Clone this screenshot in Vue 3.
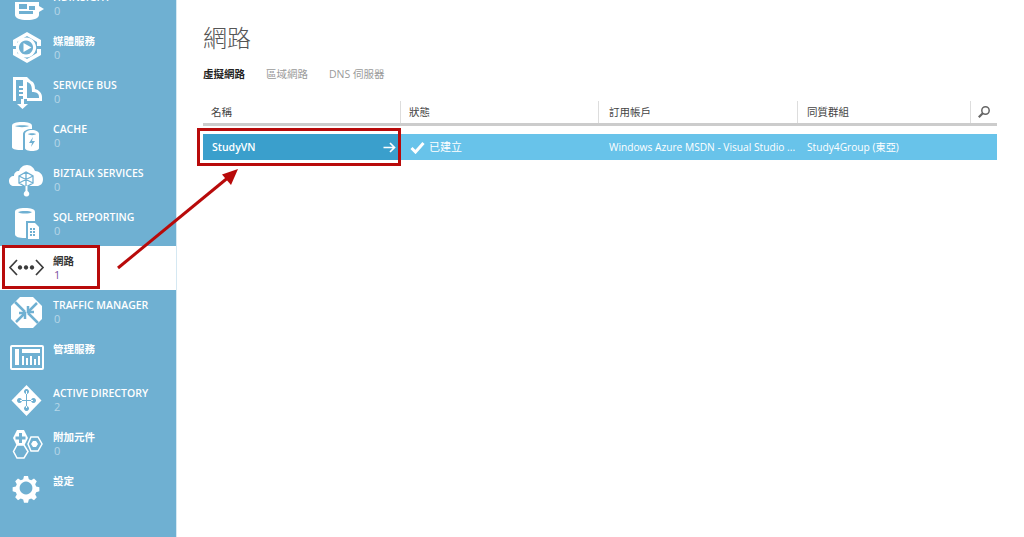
<script setup>
const F = 'f', B = 'b', T = 't'
const items = [
  { name: 'HDINSIGHT', count: '0', shapes: [
    [F, 'M15 20h24v13c0 3-5 5-12 5s-12-2-12-5z'], [B, 'M19 22h8v5h-8zM29 24h6v4h-6zM19 29h14v3h-14z'], [F, 'M39 24l5 3-5 3z'] ] },
  { name: '媒體服務', count: '0', shapes: [
    [F, 'M27 6l14 8v6h-4v-4l-10-6-10 6v4h-4v-6z'], [F, 'M13 23h4v4l10 6 10-6v-4h4v6l-14 8-14-8z'],
    [T, 'M26 13a8.500 8.500 0 1 0 .01 0z'], [F, 'M23.500 17l8 4.500-8 4.500z'] ] },
  { name: 'SERVICE BUS', count: '0', shapes: [
    [F, 'M13 7h14l4 4c3 1 4 4 4 8 4 1 7 4 7 8v4H27v-3h12v-1c0-4-3-5-7-5 0-6-1-9-5-10v17h-4V10h-7v21h-3z'],
    [F, 'M19 16h8v2h-8zM19 20h8v2h-8zM19 24h8v2h-8z'], [F, 'M21 29h3v5h4l-5.500 5-5.500-5h4z'] ] },
  { name: 'CACHE', count: '0', shapes: [
    [F, 'M12 12c0-3 4-4 10-4s10 1 10 4v3c-5 0-9 2-9 5v16h-3c-5 0-8-1-8-3z'], [B, 'M15 12c2 1.500 12 1.500 14 0-2-1-12-1-14 0z'],
    [F, 'M25 20c0-2 3-4 7-4s7 2 7 4v14c0 2-3 3-7 3s-7-1-7-3z'], [B, 'M28 20c1 1.500 7 1.500 8 0-1-1-7-1-8 0z'], [B, 'M33 23l-4 6h3l-1 4 4-6h-3z'] ] },
  { name: 'BIZTALK SERVICES', count: '0', shapes: [
    [F, 'M14 28c-3 0-5-2-5-5s2-5 5-5c0-3 2-5 5-5 1-3 4-6 8-6s7 3 8 6c4 0 8 3 8 8s-3 7-6 7z'],
    ['bl2', 'M19 18l7-4 7 4v7l-7 4-7-4zM26 14v15M19 18l14 7M33 18l-14 7'],
    [F, 'M25.500 28h2v6h-2z'], [F, 'M26.500 33a2.800 2.800 0 1 0 .01 0z'] ] },
  { name: 'SQL REPORTING', count: '0', shapes: [
    [F, 'M15 10c0-3 4-4 10-4s10 1 10 4v10h-8v16h-2c-6 0-10-1-10-4z'], [B, 'M18 10c2 2 12 2 14 0-2-1.500-12-1.500-14 0z'],
    [B, 'M26 19h10l5 5v14H26z'], [F, 'M28 21h7l4 4v12H28z'], [B, 'M30 26h2v2h-2zM33 26h2v2h-2zM30 29h2v2h-2zM33 29h2v2h-2zM30 32h2v2h-2zM33 32h2v2h-2z'] ] },
  { name: '網路', count: '1', active: true, shapes: [
    ['d', 'M17 14l-7 7.500 7 7.500M36 14l7 7.500-7 7.500'], ['k', 'M20 19.300a2.200 2.200 0 1 0 .01 0zM26 19.300a2.200 2.200 0 1 0 .01 0zM32 19.300a2.200 2.200 0 1 0 .01 0z'] ] },
  { name: 'TRAFFIC MANAGER', count: '0', shapes: [
    [F, 'M20 7h13l9 9v13l-9 9H20l-9-9V16z'],
    ['bl', 'M15 12l10 10M38 33L28 23M37 13L28 22M16 32l9-9'],
    ['bl', 'M28 16v6h6M25 29v-6h-6'] ] },
  { name: '管理服務', count: '', shapes: [
    ['o', 'M12 12h30a1 1 0 0 1 1 1v21a1 1 0 0 1-1 1H12a1 1 0 0 1-1-1V13a1 1 0 0 1 1-1z'],
    [F, 'M15 15h4v16h-4zM22 15h18v4H22zM22 22h2v9h-2zM26 24h2v7h-2zM30 22h2v9h-2zM34 25h2v6h-2zM38 22h2v9h-2z'] ] },
  { name: 'ACTIVE DIRECTORY', count: '2', shapes: [
    [F, 'M26.500 7l15 15.500-15 15.500-15-15.500z'],
    [B, 'M26 13h1v17h-1zM20 22h13v1H20zM26.500 11a2.500 2.500 0 1 0 .01 0zM19.500 20a2.500 2.500 0 1 0 .01 0zM33.500 20a2.500 2.500 0 1 0 .01 0zM26.500 28a2.500 2.500 0 1 0 .01 0z'] ] },
  { name: '附加元件', count: '0', shapes: [
    [F, 'M17 8h7l4 8-4 8h-7l-4-8z'], [B, 'M19 11h3v3.500h3.500v3H22V21h-3v-3.500h-3.500v-3H19z'],
    ['o2', 'M31 15h7l4 7-4 7h-7l-3-7z'], [F, 'M33 19h3l2 3-2 3h-3l-2-3z'], ['o2', 'M17 23h7l4 6.500-4 6.500h-7l-3.500-6.500z'] ] },
  { name: '設定', count: null, scale: true, shapes: [
    [F, 'M23.500 9h5l1 4 3 1.200 3.500-2 3.500 3.500-2 3.500 1.200 3 4 1v5l-4 1-1.200 3 2 3.500-3.500 3.500-3.500-2-3 1.200-1 4h-5l-1-4-3-1.200-3.500 2-3.500-3.500 2-3.500-1.200-3-4-1v-5l4-1 1.200-3-2-3.500 3.500-3.500 3.500 2 3-1.200z'],
    [B, 'M26 16a8 8 0 1 0 .01 0z'] ] },
]
const cols = ['名稱', '狀態', '訂用帳戶', '同質群組']
</script>

<template>
  <div class="page">
    <aside class="side">
      <ul class="nav">
        <li v-for="it in items" :key="it.name" class="item" :class="{ active: it.active }">
          <svg class="ico" width="48" height="44" viewBox="0 0 48 44">
            <g :transform="it.scale ? 'translate(26 22) scale(.8) translate(-26 -24)' : ''">
              <path v-for="(s, i) in it.shapes" :key="i" :d="s[1]" :class="'k-' + s[0]" />
            </g>
          </svg>
          <div class="label">
            <div class="name">{{ it.name }}</div>
            <div v-if="it.count" class="count">{{ it.count }}</div>
          </div>
        </li>
      </ul>
    </aside>

    <main class="main">
      <h1 class="title">網路</h1>
      <nav class="tabs">
        <span class="tab on">虛擬網路</span>
        <span class="tab">區域網路</span>
        <span class="tab">DNS 伺服器</span>
      </nav>
      <div class="table">
        <div class="head">
          <div v-for="c in cols" :key="c" class="th">{{ c }}</div>
          <div class="th search">
            <svg width="14" height="14" viewBox="0 0 14 14"><circle cx="8.500" cy="5.500" r="3.700" fill="none" stroke="#666" stroke-width="1.500"/><path d="M5.800 8.200L1.800 12.200" stroke="#666" stroke-width="2.200"/></svg>
          </div>
        </div>
        <div class="row">
          <div class="td first">
            <span>StudyVN</span>
            <svg width="13" height="11" viewBox="0 0 13 11"><path d="M0.500 5.500h11M7 1l4.500 4.500L7 10" fill="none" stroke="#fff" stroke-width="1.700"/></svg>
          </div>
          <div class="td status">
            <svg width="15" height="13" viewBox="0 0 15 13"><path d="M1.500 7l4 4L13.500 2" fill="none" stroke="#fff" stroke-width="3"/></svg>
            <span>已建立</span>
          </div>
          <div class="td sm">Windows Azure MSDN - Visual Studio ...</div>
          <div class="td sm">Study4Group (東亞)</div>
        </div>
      </div>
    </main>

    <div class="mark mark-row"></div>
    <div class="mark mark-nav"></div>
    <svg class="arrow" width="1024" height="537" viewBox="0 0 1024 537">
      <path d="M118 268L230 176" stroke="#b80a0a" stroke-width="3" fill="none"/>
      <path d="M238 169L222 174.500L231 185z" fill="#b80a0a"/>
    </svg>
  </div>
</template>

<style scoped>
.page {
  position: relative;
  display: flex;
  width: 1024px;
  height: 537px;
  overflow: hidden;
  background: #fff;
  font-family: "Open Sans", "Noto Sans CJK TC", sans-serif;
}
.side {
  width: 176px;
  flex: none;
  background: #6fb0d2;
  border-right: 1px solid #d5e8f2;
  overflow: hidden;
}
.nav {
  list-style: none;
  margin: -18px 0 0;
  padding: 0;
}
.item {
  display: flex;
  height: 44px;
  color: #fff;
}
.item.active {
  background: #fff;
  color: #333;
  margin-right: -1px;
}
.ico {
  flex: none;
}
.label {
  padding: 8px 0 0 5px;
}
.name {
  font-size: 10.500px;
  font-weight: 600;
  line-height: 14px;
  white-space: nowrap;
}
.count {
  font-size: 11px;
  line-height: 13px;
  padding-left: 1px;
  color: rgba(255, 255, 255, 0.5);
}
.active .count {
  color: #7b4f9e;
}
.k-f { fill: #fff; }
.k-b { fill: #6fb0d2; }
.k-t { fill: none; stroke: #fff; stroke-width: 3; }
.k-o { fill: none; stroke: #fff; stroke-width: 2; }
.k-o2 { fill: #6fb0d2; stroke: #fff; stroke-width: 1.500; }
.k-bl { fill: none; stroke: #6fb0d2; stroke-width: 2.500; }
.k-bl2 { fill: none; stroke: #6fb0d2; stroke-width: 1.300; }
.k-d { fill: none; stroke: #3c3c3c; stroke-width: 1.700; }
.k-k { fill: #3c3c3c; }

.main {
  flex: 1;
  min-width: 0;
  padding: 22px 27px 0 26px;
}
.title {
  margin: 0;
  font-size: 24px;
  line-height: 32px;
  font-weight: 300;
  color: #555;
}
.tabs {
  display: flex;
  gap: 21px;
  margin-top: 12px;
  font-size: 10.500px;
  line-height: 16px;
  color: #9a9a9a;
}
.tab.on {
  color: #222;
  font-weight: 700;
}
.table {
  margin-top: 19px;
}
.head {
  display: grid;
  grid-template-columns: 198px 198px 199px 173px 26px;
  height: 22px;
  border-bottom: 3px solid #ccc;
  box-sizing: content-box;
}
.th {
  padding-left: 8px;
  border-right: 1px solid #ddd;
  font-size: 10.500px;
  line-height: 22px;
  color: #444;
}
.th.search {
  border-right: 0;
  padding: 4px 0 0 6px;
  line-height: 0;
}
.th:nth-child(3) { padding-left: 10px; }
.th:nth-child(4) { padding-left: 9px; }
.row {
  display: grid;
  grid-template-columns: 198px 198px 199px 173px 26px;
  height: 26px;
  margin-top: 8px;
  background: #68c3ea;
  color: #fff;
  font-size: 10.500px;
  line-height: 26px;
}
.td {
  padding-left: 8px;
  white-space: nowrap;
  overflow: hidden;
}
.td.sm {
  font-size: 10.200px;
}
.td:nth-child(3) { padding-left: 10px; }
.td:nth-child(4) { padding-left: 9px; }
.first {
  display: flex;
  align-items: center;
  justify-content: space-between;
  padding: 0 5px 0 9px;
  background: #3a9fcc;
  font-weight: 600;
}
.status {
  display: flex;
  align-items: center;
  gap: 4px;
  padding-left: 9px;
  font-size: 11px;
}
.mark {
  position: absolute;
  box-sizing: border-box;
  border: 3px solid #b80a0a;
}
.mark-row {
  left: 197px;
  top: 128px;
  width: 204px;
  height: 38px;
}
.mark-nav {
  left: 2px;
  top: 245px;
  width: 98px;
  height: 44px;
}
.arrow {
  position: absolute;
  left: 0;
  top: 0;
  pointer-events: none;
}
</style>
